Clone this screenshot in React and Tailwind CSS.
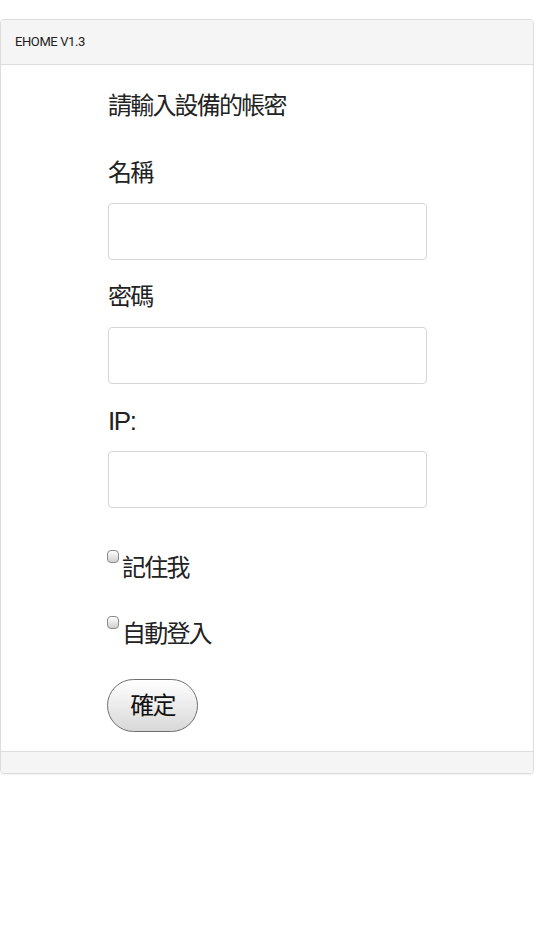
export default function App() {
  const cjk = { fontFamily: '"Liberation Sans", "Noto Sans CJK TC", sans-serif' };
  const Label = ({ children }) => (
    <div className="h-[40px] leading-[40px] text-[24px] tracking-[-1.8px] text-[#222]">{children}</div>
  );
  const Input = () => (
    <input
      type="text"
      className="block w-full h-[57px] border border-[#d6d6d6] rounded-[4px] bg-white outline-none"
    />
  );
  const Check = ({ children }) => (
    <div className="flex items-start h-[40px]">
      <span className="mt-[2px] w-[12px] h-[13px] rounded-[4px] border border-[#8a8a8a] bg-gradient-to-b from-white to-[#cfcfcf] shrink-0" />
      <span className="ml-[3px] h-[40px] leading-[40px] text-[24px] tracking-[-1.8px] text-[#222]">{children}</span>
    </div>
  );
  return (
    <div className="w-[534px] h-[950px] bg-white pt-[19px]" style={cjk}>
      <div className="w-[534px] border border-[#dcdcdc] rounded-[4px] shadow-[0_1px_2px_rgba(0,0,0,0.06)] overflow-hidden">
        <div className="h-[45px] bg-[#f5f5f5] border-b border-[#dcdcdc] flex items-center px-[14px]">
          <span className="text-[13px] tracking-[-0.4px] text-[#222]" style={{ fontFamily: 'Roboto, "Liberation Sans", sans-serif' }}>
            EHOME V1.3
          </span>
        </div>
        <div className="bg-white pt-[21px] pb-[19px]">
          <div className="w-[320px] mx-auto pl-[1px]">
            <Label>請輸入設備的帳密</Label>
            <div className="mt-[27px]">
              <Label>名稱</Label>
            </div>
            <div className="mt-[10px]">
              <Input />
            </div>
            <div className="mt-[17px]">
              <Label>密碼</Label>
            </div>
            <div className="mt-[10px]">
              <Input />
            </div>
            <div className="mt-[17px]">
              <div className="h-[40px] leading-[40px] text-[26px] tracking-[-1.4px] text-[#222]">IP:</div>
            </div>
            <div className="mt-[10px]">
              <Input />
            </div>
            <div className="mt-[40px] -ml-[1px]">
              <Check>記住我</Check>
            </div>
            <div className="mt-[26px] -ml-[1px]">
              <Check>自動登入</Check>
            </div>
            <div className="mt-[25px] -ml-[1px]">
              <button className="w-[91px] h-[53px] rounded-full border border-[#6e6e6e] bg-gradient-to-b from-white to-[#d8d8d8] text-[24px] tracking-[-1.8px] text-[#111] leading-none shadow-[inset_0_1px_0_rgba(255,255,255,0.8)]">
                確定
              </button>
            </div>
          </div>
        </div>
        <div className="h-[22px] bg-[#f5f5f5] border-t border-[#dcdcdc]" />
      </div>
    </div>
  );
}
